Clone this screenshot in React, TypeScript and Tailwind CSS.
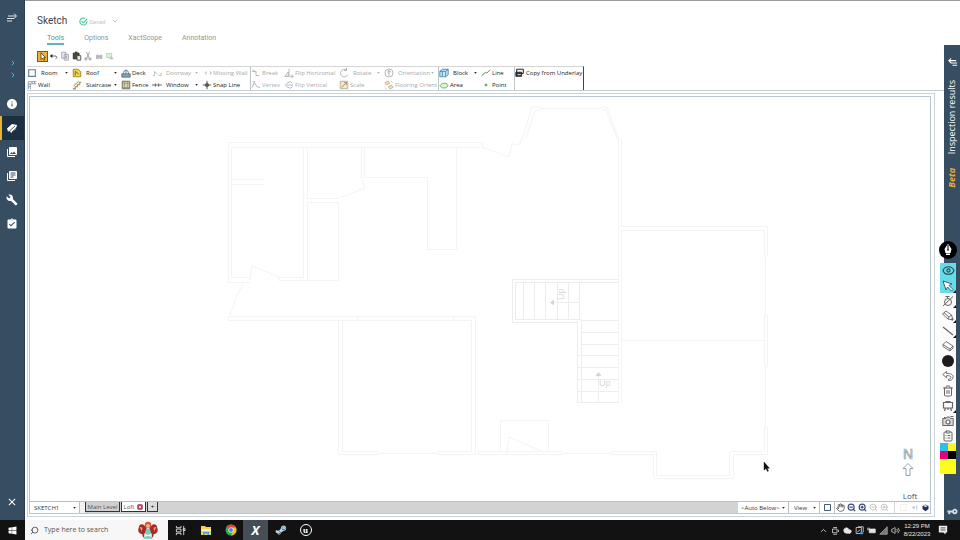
import React, { ReactNode } from 'react';
import clsx from 'clsx';
import {
  MdAssignmentTurnedIn,
  MdBuild,
  MdClose,
  MdInfo,
  MdLibraryBooks,
  MdPhotoLibrary,
  MdVpnKey,
} from 'react-icons/md';
import {
  ChevronDown,
  ChevronRight,
  ChevronUp,
  ClipboardList,
  Cloud,
  Eye,
  Hand,
  Search,
  Trash2,
  Volume2,
  ZoomIn,
  ZoomOut,
} from 'lucide-react';
import { FaSteamSymbol, FaWindows } from 'react-icons/fa';

interface GlyphProps {
  children: ReactNode;
  className?: string;
}

// 12x12 line icon used by every toolbar
const Glyph = ({ children, className = 'size-[10px]' }: GlyphProps) => (
  <svg viewBox="0 0 12 12" className={clsx('shrink-0', className)} fill="none" stroke="currentColor" aria-hidden="true">
    {children}
  </svg>
);

const Caret = ({ className = 'text-[#222]' }: { className?: string }) => (
  <svg viewBox="0 0 4 3" className={clsx('h-[2px] w-[3px] shrink-0', className)} aria-hidden="true">
    <path d="M0 0h4L2 2.6z" fill="currentColor" />
  </svg>
);

const icons = {
  room: <path d="M2 2h8v8H2z" stroke="#5f7f96" strokeWidth="1.3" />,
  wall: <path d="M1.5 11V2H11M4 11V4.5h7M1.5 5H4M1.5 8H4M6 2v2M9 2v2" stroke="#7a8e9c" />,
  roof: (
    <>
      <path d="M1.5 1.5h6l3 3v6h-9z" fill="#f2d449" stroke="#907b2c" />
      <path d="M4 9V4l4 3.5" stroke="#6a5b20" />
    </>
  ),
  stairs: (
    <>
      <path d="M1 10.500h3V8h2.500V5.500H9V3h2" stroke="#b59a5c" strokeWidth="1.6" />
      <path d="M2 7 8 1.500" stroke="#85795a" />
    </>
  ),
  deck: (
    <>
      <path d="M1 7h10v4H1z" fill="#7fa5bd" stroke="#4c6a80" />
      <path d="M3 7c0-6 6-6 6 0M6 2.500V7" stroke="#4c6a80" />
    </>
  ),
  fence: (
    <>
      <path d="M1.500 1.500h9v9h-9z" fill="#d5d0aa" stroke="#5d5b46" />
      <path d="M4 1v10M8 1v10M1 4h10M1 9h10" stroke="#87846a" strokeWidth=".7" />
    </>
  ),
  doorway: <path d="M1 9h2V4l4 4M8 9h3V6" stroke="#b5b5b5" />,
  window: <path d="M0 6h4M8 6h4M4 4v4M8 4v4M4 6h4" stroke="#555" />,
  missing: <path d="M3 6h2M10 6h2M5 4v4M10 4v4" stroke="#bbb" />,
  snap: <path d="M6 1v10M1 6h10M4.500 4.500h3v3h-3z" stroke="#333" />,
  breaks: <path d="M1 4h5v5h4M2 2l3 3" stroke="#aaa" />,
  vertex: <path d="M1 9 4 3l3 5 4 1M2 2h3" stroke="#aaa" />,
  flipH: <path d="M6 1v10M1 10h4V5zM11 10H7M9 8l2 2-2 2" stroke="#aaa" />,
  flipV: <path d="M1 6h10M3 4l5-2 2 2M3 8l5 2 2-2" stroke="#aaa" />,
  rotate: <path d="M9 2.500A4.500 4.500 0 1 0 10.500 8M9 0v3H6" stroke="#aaa" />,
  scale: (
    <>
      <path d="M1.500 1.500h9v9h-9z" fill="#eee5cd" stroke="#b8aa85" />
      <path d="M3 9 9 3M6 3h3v3" stroke="#9d8f6a" />
    </>
  ),
  orient: (
    <>
      <circle cx="6" cy="6" r="4.800" stroke="#aaa" />
      <path d="M6 9V3M4 5l2-2 2 2" stroke="#999" />
    </>
  ),
  floor: (
    <>
      <path d="M1 3l4-2 2 3-4 2zM5 8l4-2 2 3-4 2z" fill="#eadfbe" stroke="#bba978" strokeWidth=".8" />
      <path d="M8 1l2 2M1 9l2 2" stroke="#c9ad62" />
    </>
  ),
  block: (
    <>
      <path d="M1 4l3-2.500h7V8l-3 2.500H1z" fill="#cfe8f5" stroke="#2f7fae" />
      <path d="M1 4h7v6.500M8 4l3-2.500M4 4v6" stroke="#2f7fae" />
    </>
  ),
  area: <path d="M1 7l3-3h5l2 3-3 2.500H4z" fill="#dff3d6" stroke="#5da953" />,
  line: <path d="M1 9l4-3.500L7 6l4-4" stroke="#4b9a5c" strokeWidth="1.200" />,
  point: <path d="M5 5h2v2H5z" fill="#58a55a" stroke="#58a55a" />,
  copy: (
    <>
      <path d="M2 1.500h8v5H2z" stroke="#222" strokeWidth="1.200" />
      <path d="M1 5h7v5H1z" fill="#333" stroke="#222" />
      <path d="M3 8h4" stroke="#fff" />
    </>
  ),
};

interface Tool {
  label: string;
  icon: keyof typeof icons;
  menu?: boolean;
  wide?: boolean;
  off?: boolean;
}

interface ToolColumn {
  width: string;
  items: Tool[];
}

const ribbonGroups: ToolColumn[][] = [
  [
    { width: 'w-[45px]', items: [{ label: 'Room', icon: 'room', menu: true, wide: true }, { label: 'Wall', icon: 'wall' }] },
    {
      width: 'w-[49px]',
      items: [
        { label: 'Roof', icon: 'roof', menu: true, wide: true },
        { label: 'Staircase', icon: 'stairs', menu: true, wide: true },
      ],
    },
    { width: 'w-[31px]', items: [{ label: 'Deck', icon: 'deck' }, { label: 'Fence', icon: 'fence' }] },
    {
      width: 'w-[50px]',
      items: [
        { label: 'Doorway', icon: 'doorway', menu: true, wide: true, off: true },
        { label: 'Window', icon: 'window', menu: true, wide: true },
      ],
    },
    {
      width: 'w-[48px]',
      items: [{ label: 'Missing Wall', icon: 'missing', off: true }, { label: 'Snap Line', icon: 'snap' }],
    },
  ],
  [
    {
      width: 'w-[33px]',
      items: [{ label: 'Break', icon: 'breaks', off: true }, { label: 'Vertex', icon: 'vertex', off: true }],
    },
    {
      width: 'w-[55px]',
      items: [
        { label: 'Flip Horizontal', icon: 'flipH', off: true },
        { label: 'Flip Vertical', icon: 'flipV', off: true },
      ],
    },
    {
      width: 'w-[45px]',
      items: [
        { label: 'Rotate', icon: 'rotate', menu: true, wide: true, off: true },
        { label: 'Scale', icon: 'scale', off: true },
      ],
    },
    {
      width: 'w-[54px]',
      items: [
        { label: 'Orientation', icon: 'orient', menu: true, wide: true, off: true },
        { label: 'Flooring Orient', icon: 'floor', off: true },
      ],
    },
  ],
  [
    { width: 'w-[42px]', items: [{ label: 'Block', icon: 'block', menu: true, wide: true }, { label: 'Area', icon: 'area' }] },
    { width: 'w-[33px]', items: [{ label: 'Line', icon: 'line' }, { label: 'Point', icon: 'point' }] },
  ],
  [{ width: 'w-[68px]', items: [{ label: 'Copy from Underlay', icon: 'copy' }] }],
];

const RibbonButton = ({ label, icon, menu, wide, off }: Tool) => (
  <button
    type="button"
    disabled={off}
    className={clsx('flex h-3 w-full items-center overflow-hidden whitespace-nowrap', off ? 'text-[#a9a9a9]' : 'text-[#1c1c1c]')}
  >
    <span className={clsx('flex shrink-0', wide ? 'w-[14px]' : 'w-[11px]')}>
      <Glyph>{icons[icon]}</Glyph>
    </span>
    <span className="flex-1 text-left">{label}</span>
    {menu && (
      <span className="mr-1 flex">
        <Caret className={off ? 'text-[#aaa]' : 'text-[#222]'} />
      </span>
    )}
  </button>
);

const Ribbon = () => (
  <div className="flex h-[25px] border-b border-[#c3ced4] font-['Open_Sans',sans-serif] text-[6px] leading-3">
    {ribbonGroups.map((group, i) => (
      <div
        key={i}
        className={clsx(
          'flex shrink-0 border-t border-r border-t-[#d5d5d5]',
          i === ribbonGroups.length - 1 ? 'border-r-[#444]' : 'border-r-[#bcc5ca]'
        )}
      >
        {group.map((col) => (
          <div key={col.items[0].label} className={clsx('shrink-0', col.width)}>
            {col.items.map((item) => (
              <RibbonButton key={item.label} {...item} />
            ))}
          </div>
        ))}
      </div>
    ))}
  </div>
);

const Sidebar = () => {
  const items = [
    { label: 'Info', node: <MdInfo size={12} /> },
    {
      label: 'Sketch',
      active: true,
      node: (
        <Glyph className="size-3">
          <path d="M1 6.500 6 2l5 1-1 4-5 4-1-2-2 .5z" fill="#fff" stroke="none" />
          <path d="M3.500 9 9 4M6 10l5-4.500" stroke="#1d3041" strokeWidth=".8" />
        </Glyph>
      ),
    },
    { label: 'Photos', node: <MdPhotoLibrary size={12} /> },
    { label: 'Documents', node: <MdLibraryBooks size={12} /> },
    { label: 'Tools', node: <MdBuild size={12} /> },
    { label: 'Review', node: <MdAssignmentTurnedIn size={12} /> },
  ];

  return (
    <aside className="flex w-[25px] shrink-0 flex-col border-r border-[#2a3d50] bg-[#364d62] text-white">
      <button type="button" aria-label="Expand" className="mt-3 flex h-3 justify-center">
        <Glyph className="size-3">
          <path d="M2 4h8M8 1.500 10.500 4 8 6.500M1 6.500h7M1 9h5" stroke="#dfe6ec" />
        </Glyph>
      </button>
      <div className="mt-[33px] flex h-6 flex-col items-center justify-around pl-[2px] text-[#45b6d6]">
        <ChevronRight size={8} strokeWidth={3} />
        <ChevronRight size={8} strokeWidth={3} />
      </div>
      <nav className="mt-[11px] flex flex-col">
        {items.map((item) => (
          <button
            key={item.label}
            type="button"
            aria-label={item.label}
            className={clsx(
              'flex h-6 items-center justify-center border-l-2 pr-[2px]',
              item.active ? 'border-[#e5b32d] bg-[#1d3041]' : 'border-transparent'
            )}
          >
            {item.node}
          </button>
        ))}
      </nav>
      <button type="button" aria-label="Close" className="mt-auto mb-3 flex h-3 items-center justify-center">
        <MdClose size={12} />
      </button>
    </aside>
  );
};

const QuickTools = () => (
  <div className="mt-[5px] ml-3 flex h-3 items-center gap-px">
    <button type="button" aria-label="Select" className="flex size-[11px] items-center justify-center border border-[#7a5a16] bg-[#f0b13a]">
      <Glyph className="size-[9px]">
        <path d="M4 1v9l2-2 1.500 3 1.500-.7L7.500 7.500H10z" fill="#fff" stroke="#3c2d0c" />
      </Glyph>
    </button>
    <button type="button" aria-label="Undo">
      <Glyph>
        <path d="M3 6h4c3 0 3 3 1 3" stroke="#444" />
        <path d="M1 6l3-2.500v5z" fill="#222" stroke="none" />
      </Glyph>
    </button>
    <button type="button" aria-label="Copy">
      <Glyph>
        <path d="M2 1.500h5v7H2zM5 4h5v7H5zM6.500 6.500h2M6.500 8.500h2" fill="#eee" stroke="#9a9aa6" />
      </Glyph>
    </button>
    <button type="button" aria-label="Paste" className="ml-px">
      <Glyph>
        <path d="M1.500 2.500h7v7h-7z" fill="#4c4a3c" stroke="#2c2c28" />
        <path d="M3.500 1.500h3" stroke="#333" strokeWidth="1.500" />
        <path d="M6 5.500h4.500v5.500H6z" fill="#e9f0dc" stroke="#444" />
      </Glyph>
    </button>
    <button type="button" aria-label="Cut">
      <Glyph>
        <path d="M4 1l3.500 7.500M8 1 4.500 8.500" stroke="#999" />
        <circle cx="3.500" cy="9.500" r="1.300" stroke="#888" />
        <circle cx="8.500" cy="9.500" r="1.300" stroke="#888" />
      </Glyph>
    </button>
    <button type="button" aria-label="Find">
      <Glyph>
        <path d="M3 5h2.500v4H3zM7 5h2.500v4H7zM5 6.500h2" fill="#bbb" stroke="#b0b0b5" />
      </Glyph>
    </button>
    <button type="button" aria-label="Image">
      <Glyph>
        <path d="M2 3h6v5H2z" fill="#e1eee0" stroke="#bccdb9" />
        <path d="M5 10l2.500-4 3 4z" fill="#a5d494" stroke="none" />
      </Glyph>
    </button>
  </div>
);

const tabs = [
  { label: 'Tools', gap: 'ml-[22px]' },
  { label: 'Options', gap: 'ml-5' },
  { label: 'XactScope', gap: 'ml-5' },
  { label: 'Annotation', gap: 'ml-5' },
];

const Header = () => (
  <header className="pt-3 font-[Roboto,sans-serif]">
    <div className="ml-3 flex h-4 items-center">
      <h1 className="text-[10px] leading-4 text-[#3d4348]">Sketch</h1>
      <Glyph className="ml-3 size-[9px]">
        <path d="M10.500 5.500A4.700 4.700 0 1 1 8 1.900M3.500 5.500l2.300 2.300L11 2.500" stroke="#3fc596" strokeWidth="1.400" />
      </Glyph>
      <span className="ml-px text-[6px] text-[#c4c8ca]">Saved</span>
      <button type="button" aria-label="Save options" className="ml-[6px] text-[#a1a5a8]">
        <ChevronDown size={8} />
      </button>
    </div>
    <nav className="mt-[3px] flex">
      {tabs.map((tab, i) => (
        <button
          key={tab.label}
          type="button"
          className={clsx(
            'h-[13px] border-b-2 text-[7px] leading-3',
            tab.gap,
            i === 0 ? 'border-[#62b3b8] text-[#409ba1]' : 'border-transparent text-[#8f9699]'
          )}
        >
          {tab.label}
        </button>
      ))}
    </nav>
    <QuickTools />
  </header>
);

const FloorPlan = () => (
  <svg
    viewBox="30 98 900 403"
    preserveAspectRatio="xMinYMin meet"
    className="size-full"
    fill="none"
    stroke="#f4f4f4"
    role="img"
    aria-label="Floor plan"
  >
    {/* upper left rooms */}
    <path d="M482 143.500H228.500V283.500H250M480 148.500H231.500V278.500H249M303.500 148.500V278.500H279V281.500H338.500V203.500H307.500V281.500M307.500 148.500V199.500H339M361.500 148.500V178.500M364.500 148.500V178.500H427.500V250.500H456.500V148.500" />
    <path d="M232 180.500H264M232 185.500H264M340 198.500L365 189L361 178M250 281L252 267L279 278M243 285L237 297L230 316" />
    <path d="M228.500 321.500V317.500H475.500V455.500M228.500 321.500H471.500V452.500M338.500 321.500V455.500H378V452.500H342.500V321.500M357.500 317.500v4M453.500 317.500v4" />
    {/* bay at the top */}
    <path d="M482 143v5L509 158L512 145L519 146L523 137L532 108H541V111H535L526 139M541 109.500H602M601 108H607L618 139M602 111h4l12 31" />
    {/* right wing */}
    <path d="M618.500 139V404M621.500 404V231.500H764.500V257H767.500V227.500H621.500V139M765.500 257V316M764.500 316h3v51h-3zM765.500 367V428M764.500 428V452.500H729.500V476.500H656.500V452.500H611V455.500H653.500V479.500H733.500V455.500H767.500V428zM621.500 341.500H764" />
    {/* bottom wall */}
    <path d="M378 454.500H438M475.500 455.500H438V452.500H471M478 452.500H562V455.500H478zM562 454.500H611M500.500 452V421.500H548.500V452M507 455L509 438L541 452" />
    {/* stairs */}
    <g stroke="#ededed">
      <path d="M618 280.500H512.500V323.500H577.500V403.500H618M618 283.500H515.500V320.500H581.500V403.500M523.500 284V320M534.500 284V320M545.500 284V320M557.500 284V320M568.500 284V320M579.500 284V320M552 303.500H580" />
      <path d="M581 321.500H618M581 333.500H618M581 345.500H618M578 356.500H618M578 368.500H618M578 380.500H618M578 392.500H618M598.500 375V404" />
    </g>
    <path d="M550 303.500l4-3v6zM598.500 373l-3 4h6z" fill="#d5d5d5" stroke="none" />
    <g fill="#d8d8d8" stroke="none" className="font-['Liberation_Sans',sans-serif] text-[9px]">
      <text x="599" y="387">Up</text>
      <text transform="translate(564 301) rotate(-90)">Up</text>
    </g>
    <path d="M764 463v8l2-1.500 1.500 3 1-.5-1.300-2.800h2.300z" fill="#111" stroke="#111" strokeWidth=".4" />
  </svg>
);

const Canvas = () => (
  <div className="relative min-h-0 flex-1 overflow-hidden bg-white">
    <FloorPlan />
    <div className="absolute right-[10px] bottom-0 flex flex-col items-center">
      <svg viewBox="0 0 16 32" className="mr-1 mb-1 h-8 w-4" fill="#fff" stroke="#8b99a3" aria-label="North">
        <text x="3" y="13" strokeWidth=".7" className="font-['Liberation_Sans',sans-serif] text-[14px]">
          N
        </text>
        <path d="M8 17.500l5 5h-3v7H6v-7H3z" strokeWidth=".9" />
      </svg>
      <span className="mt-2 font-['Open_Sans',sans-serif] text-[8px] leading-[11px] text-[#3e5870]">Loft</span>
    </div>
  </div>
);

const statusTools = [
  { label: 'Pan', node: <Hand size={9} className="text-[#444]" /> },
  { label: 'Zoom out', node: <ZoomOut size={9} strokeWidth={3} className="text-[#39477a]" /> },
  { label: 'Zoom in', node: <ZoomIn size={9} strokeWidth={3} className="text-[#39477a]" /> },
  { label: 'Zoom window', node: <ZoomOut size={9} className="text-[#b3b3b3]" /> },
  { label: 'Zoom extents', node: <ZoomIn size={9} className="text-[#b3b3b3]" /> },
];

interface DropDownProps {
  label: string;
  value: string;
  className: string;
}

const DropDown = ({ label, value, className }: DropDownProps) => (
  <label className={clsx('flex shrink-0 items-center border-r border-[#b7c0c6] bg-white pr-[3px]', className)}>
    <select aria-label={label} className="min-w-0 flex-1 appearance-none bg-transparent text-[#333]">
      <option>{value}</option>
    </select>
    <Caret />
  </label>
);

const StatusBar = () => (
  <div className="flex h-3 shrink-0 border-t border-[#b5bfc5] bg-[#d3d3d3] font-['Open_Sans',sans-serif] text-[6px] leading-[10px]">
    <DropDown label="Sketch" value="SKETCH1" className="w-[50px] pl-1" />
    <div className="w-[5px] bg-[#f2f2f2]" />
    <div className="flex h-[10px] gap-px text-[#555]">
      <button type="button" className="w-[35px] border-x border-b border-[#333] bg-[#cfcfcf] leading-2 whitespace-nowrap">
        Main Level
      </button>
      <button type="button" className="flex w-[25px] items-center justify-center gap-[3px] border-x border-b border-[#333] bg-white leading-2">
        Loft
        <Glyph className="size-[6px]">
          <rect x="1" y="1" width="10" height="10" rx="2" fill="#c64560" stroke="#8d2d42" />
          <path d="M4 4l4 4M8 4l-4 4" stroke="#fff" strokeWidth="1.500" />
        </Glyph>
      </button>
      <button type="button" aria-label="Add level" className="w-[11px] border-x border-b border-[#333] bg-[#dcdcdc] leading-2 text-black">
        +
      </button>
    </div>
    <div className="ml-auto flex bg-white">
      <DropDown label="Underlay" value="<Auto Below>" className="w-[51px] pl-[3px]" />
      <DropDown label="View" value="View" className="w-[31px] pl-[5px]" />
      <button type="button" aria-label="Fit" className="flex w-[15px] items-center justify-center border-r border-[#b7c0c6]">
        <Glyph className="size-[9px]">
          <path d="M2 2h8v8H2z" stroke="#334a66" strokeWidth="1.200" />
        </Glyph>
      </button>
      {statusTools.map((tool) => (
        <button key={tool.label} type="button" aria-label={tool.label} className="flex w-[11px] items-center justify-center">
          {tool.node}
        </button>
      ))}
      <div className="ml-1 flex items-center gap-[2px] border-l border-[#d5d5d5] pl-1">
        <Glyph className="size-[9px]">
          <path d="M2 2h8v8H2z" stroke="#ddd" strokeDasharray="1 1" />
        </Glyph>
        <Glyph className="size-[9px]">
          <path d="M3 6h4M9 3v6M5 4v4" stroke="#aab4bd" />
        </Glyph>
        <Glyph className="size-[9px]">
          <path d="M2 4l4-2 4 2v4l-4 3-4-3z" fill="#27276b" stroke="none" />
          <path d="M3 4l3-1.800L9 4 6 5.800z" fill="#c7d7ee" stroke="none" />
        </Glyph>
      </div>
    </div>
  </div>
);

const markupTools: { label: string; node: ReactNode; more?: boolean }[] = [
  {
    label: 'Spotlight',
    more: true,
    node: (
      <Glyph className="size-3">
        <circle cx="6" cy="7" r="3.500" />
        <path d="M1 11 11 1.500M3.500 1.500h4M5.500 1.500v2" />
      </Glyph>
    ),
  },
  {
    label: 'Pencil',
    more: true,
    node: (
      <Glyph className="size-3">
        <path d="M.5 4 4 1l5.500 4 1.500 5-5-1zM2 2.800l5 4.200M9.500 5 7 7l-1 2M11 10l-2-.5 1.500-1.500z" strokeWidth=".9" />
      </Glyph>
    ),
  },
  {
    label: 'Line',
    more: true,
    node: (
      <Glyph className="size-3">
        <path d="M1 2l10 8" strokeWidth="1.300" />
      </Glyph>
    ),
  },
  {
    label: 'Eraser',
    node: (
      <Glyph className="size-3">
        <path d="M1 4.500 4 1.500l7 4.500v2L8 11 1 6.500zM1 4.500 8 9l3-3M8 9v2" strokeWidth=".9" />
      </Glyph>
    ),
  },
  { label: 'Ink colour', node: <span className="size-3 rounded-full bg-[#1c1c1c]" /> },
  {
    label: 'Undo',
    node: (
      <Glyph className="size-3">
        <path d="M.8 4.500 4.500 1.500v2C9 3 11.500 5 11 7.500 10.500 10 8.500 10.500 6.500 10.500V9C8 9 9 8.500 9 7.300 9 6 7 5.500 4.500 5.700v2z" strokeWidth=".9" />
      </Glyph>
    ),
  },
  { label: 'Delete', node: <Trash2 size={12} strokeWidth={2} /> },
  {
    label: 'Whiteboard',
    more: true,
    node: (
      <Glyph className="size-3">
        <path d="M1.500 2.500h9v5.500h-9zM4 2.500v-1h4v1M3.500 8l-1 3M8.500 8l1 3M6 8v2" strokeWidth="1.200" />
      </Glyph>
    ),
  },
  {
    label: 'Screenshot',
    node: (
      <Glyph className="size-3">
        <path d="M.8 3.500H4l1-1.500h2.500l1 1.500h2.700v7H.8z" fill="#d9d9d9" />
        <circle cx="6" cy="7" r="2" fill="#fff" strokeWidth="1.200" />
        <path d="M8.500 1.500h3M2 2.500h1.500" />
      </Glyph>
    ),
  },
  { label: 'Clipboard', node: <ClipboardList size={12} strokeWidth={2} /> },
];

const MoreMark = () => (
  <svg viewBox="0 0 4 4" className="absolute right-0 bottom-0 size-[3px]" aria-hidden="true">
    <path d="M4 0v4H0z" fill="#111" />
  </svg>
);

// Floating pen palette that sits over the right edge of the window
const MarkupPalette = () => (
  <div className="absolute top-[241px] right-1 flex w-4 flex-col items-center text-[#666]">
    <span className="mb-1 flex size-[18px] shrink-0 items-center justify-center rounded-full bg-black">
      <Glyph className="size-3">
        <path d="M6 .5 9 5 8 9H4L3 5zM4 10.500h4" fill="#fff" stroke="#fff" />
        <path d="M6 1v5" stroke="#000" />
        <circle cx="6" cy="6" r=".8" fill="#000" stroke="none" />
      </Glyph>
    </span>
    <div className="w-full bg-[#65dcec] text-[#27444c]">
      <button type="button" aria-label="Show" className="flex h-[15px] w-full items-center justify-center">
        <Eye size={13} />
      </button>
      <button type="button" aria-label="Pointer" className="relative flex h-[15px] w-full items-center justify-center">
        <Glyph className="size-3">
          <path d="M1 1l9 3-3 1.500 4 4L9.500 11l-4-4L4 10z" fill="#fff" strokeWidth=".8" />
        </Glyph>
        <MoreMark />
      </button>
    </div>
    <div className="w-full bg-[#fbfbfb]">
      {markupTools.map((tool) => (
        <button key={tool.label} type="button" aria-label={tool.label} className="relative flex h-[15px] w-full items-center justify-center">
          {tool.node}
          {tool.more && <MoreMark />}
        </button>
      ))}
    </div>
    <div className="grid w-full grid-cols-2">
      <span className="h-2 bg-[#2cc0ec]" />
      <span className="h-2 bg-[#fff32a]" />
      <span className="h-2 bg-[#e5007e]" />
      <span className="h-2 bg-black" />
      <span className="col-span-2 h-[15px] bg-[#fcfc1e]" />
    </div>
  </div>
);

const ResultsRail = () => (
  <aside className="flex w-4 shrink-0 flex-col border-t border-[#9b9b9b] pt-11 font-['Open_Sans',sans-serif] text-white">
    <div className="flex flex-1 flex-col items-center bg-[#364d62]">
      <button type="button" aria-label="Open results" className="mt-3 flex">
        <Glyph className="size-[11px]">
          <path d="M10 4H2M4.500 1.500 2 4l2.500 2.500M4 6.500h7M6 9h5" strokeWidth="1.200" />
        </Glyph>
      </button>
      <span className="mt-3 rotate-180 text-[9px] leading-3 [writing-mode:vertical-rl]">Inspection results</span>
      <span className="mt-[14px] rotate-180 text-[9px] leading-3 font-bold text-[#e8ac32] italic [writing-mode:vertical-rl]">Beta</span>
      <MdVpnKey size={11} className="mt-auto mb-[3px] -scale-x-100 text-[#d5dde4]" />
    </div>
  </aside>
);

const taskbarApps = [
  {
    label: 'Task View',
    node: (
      <Glyph className="size-[11px]">
        <path d="M1.500 1v2h5V1M1.500 4.500h5v3h-5zM1.500 11V9h5v2M9.500 1v10M9 4h2v2H9z" stroke="#ddd" />
      </Glyph>
    ),
  },
  {
    label: 'File Explorer',
    node: (
      <Glyph className="size-3">
        <path d="M1 2h4l1 1h5v8H1z" fill="#f7cf57" stroke="none" />
        <path d="M1 5h10v2H1z" fill="#fff0b5" stroke="none" />
        <path d="M3 8h6v3H7.500V9.500h-3V11H3z" fill="#4a9edb" stroke="none" />
      </Glyph>
    ),
  },
  {
    label: 'Chrome',
    node: (
      <svg viewBox="0 0 24 24" className="size-3" aria-hidden="true">
        <circle cx="12" cy="12" r="11" fill="#34a853" />
        <path d="M12 12 2.500 6.500A11 11 0 0 1 21.500 6.500z" fill="#ea4335" />
        <path d="M12 7h9.800A11 11 0 0 1 12 23l4.300-8.500z" fill="#fbbc05" />
        <circle cx="12" cy="12" r="5.200" fill="#fff" />
        <circle cx="12" cy="12" r="4" fill="#4285f4" />
      </svg>
    ),
  },
  { label: 'Xactimate', active: true, node: <span className="text-[13px] leading-4 font-bold text-white italic">X</span> },
  { label: 'Steam', node: <FaSteamSymbol size={12} className="text-[#b8d4ea]" /> },
  {
    label: 'Unreal',
    node: (
      <span className="flex size-3 items-center justify-center rounded-full border border-white font-['Liberation_Serif',serif] text-[9px] leading-3 font-bold text-white">
        u
      </span>
    ),
  },
];

const Taskbar = () => (
  <footer className="flex h-5 shrink-0 items-stretch bg-[#121212] font-['Open_Sans',sans-serif] text-white">
    <button type="button" aria-label="Start" className="flex w-[25px] items-center justify-center">
      <FaWindows size={9} />
    </button>
    <label className="flex w-[143px] items-center bg-[#f7f7f7] pl-[5px]">
      <Search size={9} className="-scale-x-100 text-[#333]" />
      <input
        type="text"
        aria-label="Search"
        placeholder="Type here to search"
        className="ml-[5px] w-[84px] bg-transparent text-[7px] leading-3 placeholder:text-[#555]"
      />
      <svg viewBox="0 0 24 20" className="ml-[9px] h-[19px] w-[22px] shrink-0" aria-hidden="true">
        <path d="M11 9C8 1 2 2 2 7c-2 4 1 7 4 7-1 4 4 5 6 2zM13 9c3-8 9-7 9-2 2 4-1 7-4 7 1 4-4 5-6 2z" fill="#a92a23" />
        <path d="M3 6l3 1-1 4zM21 6l-3 1 1 4z" fill="#f1a28b" />
        <circle cx="12" cy="4" r="3.500" fill="#e0522d" />
        <circle cx="12" cy="5" r="2" fill="#f5b48b" />
        <path d="M10 8h4l3 11H7z" fill="#73cdbd" />
        <path d="M8 13l4 2 4-2v4l-4-1-4 1z" fill="#e9f5e9" />
      </svg>
    </label>
    <nav className="flex">
      {taskbarApps.map((app) => (
        <button
          key={app.label}
          type="button"
          aria-label={app.label}
          className={clsx('flex w-[25px] items-center justify-center', app.active && 'bg-[#454d56]')}
        >
          {app.node}
        </button>
      ))}
    </nav>
    <div className="ml-auto flex items-center gap-[3px] text-[#e6e6e6]">
      <ChevronUp size={9} />
      <Glyph className="size-[9px]">
        <path d="M2 4h6v5H2zM3 2h5M3 11h5M10 5v3" />
      </Glyph>
      <Cloud size={9} fill="currentColor" />
      <Glyph className="size-[9px]">
        <path d="M1.500 2h7v8h-7zM4 1h7v7M3 8l4-3" />
        <path d="M7 8h4v3H7z" fill="#4c94d8" stroke="none" />
      </Glyph>
      <Glyph className="size-[9px]">
        <path d="M3 4h8v5H3z" fill="currentColor" />
        <path d="M0 3h4M0 5h3" />
      </Glyph>
      <Glyph className="size-[9px]">
        <path d="M1 11 11 1v10z" fill="#777" stroke="#aaa" />
      </Glyph>
      <Volume2 size={9} />
      <div className="w-7 text-center font-['Liberation_Sans',sans-serif] text-[6px] leading-2 whitespace-nowrap">
        <div>12:29 PM</div>
        <div>8/22/2023</div>
      </div>
      <button type="button" aria-label="Notifications" className="mr-3 ml-1">
        <Glyph className="size-[10px]">
          <path d="M1 1h10v8H9v2.500L6.500 9H1z" fill="#eee" stroke="none" />
          <path d="M3 3.500h6M3 6h6" stroke="#333" />
        </Glyph>
      </button>
    </div>
  </footer>
);

export default function App() {
  return (
    <div className="flex h-screen flex-col overflow-hidden bg-white">
      <div className="relative flex min-h-0 flex-1">
        <Sidebar />
        <main className="flex min-w-0 flex-1 flex-col border-t border-[#9b9b9b]">
          <Header />
          <div className="mt-1 flex min-h-0 flex-1 flex-col">
            <div className="pl-[2px]">
              <Ribbon />
            </div>
            <div className="mt-[2px] mr-[9px] mb-[3px] ml-[2px] flex min-h-0 flex-1 flex-col border border-[#c9d5db] pt-[2px] pr-[3px] pb-[2px] pl-px">
              <div className="flex min-h-0 flex-1 flex-col border border-[#b9c7cf]">
                <Canvas />
                <StatusBar />
              </div>
            </div>
          </div>
        </main>
        <ResultsRail />
        <MarkupPalette />
      </div>
      <Taskbar />
    </div>
  );
}
